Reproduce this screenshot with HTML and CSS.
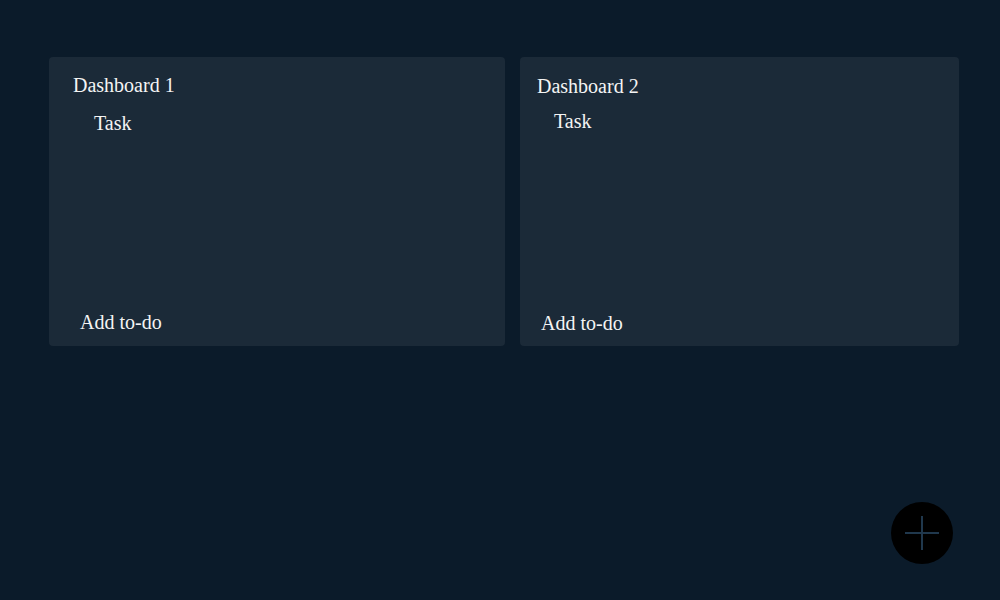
FILE: index.html
```html
<!DOCTYPE html>
<html>
<head>
<meta charset="utf-8">
<link rel="stylesheet" href="styles.css">
</head>
<body>
<main class="board">
  <section class="card card-one">
    <h2 class="card-title">Dashboard 1</h2>
    <ul class="tasks">
      <li class="task">Task</li>
    </ul>
    <button class="add-todo">Add to-do</button>
  </section>
  <section class="card card-two">
    <h2 class="card-title">Dashboard 2</h2>
    <ul class="tasks">
      <li class="task">Task</li>
    </ul>
    <button class="add-todo">Add to-do</button>
  </section>
</main>
<button class="fab" aria-label="Add dashboard">
  <svg width="34" height="34" viewBox="0 0 34 34"><path d="M17 0V34M0 17H34" stroke="#20384d" stroke-width="2" fill="none"/></svg>
</button>
</body>
</html>
```
FILE: styles.css
```css
html, body {
  margin: 0;
  height: 100%;
  background: #0b1b2a;
}
body {
  font-family: "Liberation Serif", "Times New Roman", serif;
  color: #f4f4f4;
  font-size: 20px;
}
.board {
  display: flex;
  gap: 15px;
  padding: 57px 0 0 49px;
  align-items: flex-start;
}
.card {
  box-sizing: border-box;
  height: 289px;
  background: #1b2a38;
  border-radius: 4px;
  display: flex;
  flex-direction: column;
}
.card-one {
  width: 456px;
  padding: 17px 24px 12px;
}
.card-two {
  width: 439px;
  padding: 18px 17px 11px;
}
.card-title {
  margin: 0;
  font-family: "Liberation Serif", serif;
  font-size: 20px;
  font-weight: normal;
  line-height: 23px;
}
.tasks {
  list-style: none;
  margin: 15px 0 0 21px;
  padding: 0;
}
.card-two .tasks {
  margin: 12px 0 0 17px;
}
.task {
  line-height: 23px;
}
.add-todo {
  margin-top: auto;
  align-self: flex-start;
  background: none;
  border: 0;
  padding: 0;
  margin-left: 7px;
  font-family: "Liberation Serif", serif;
  font-size: 20px;
  line-height: 23px;
  color: inherit;
}
.card-two .add-todo {
  margin-left: 4px;
}
.fab {
  position: fixed;
  right: 47px;
  bottom: 36px;
  width: 62px;
  height: 62px;
  border-radius: 50%;
  border: 0;
  padding: 0;
  background: #000;
  display: flex;
  align-items: center;
  justify-content: center;
}
.fab svg {
  display: block;
}
```
